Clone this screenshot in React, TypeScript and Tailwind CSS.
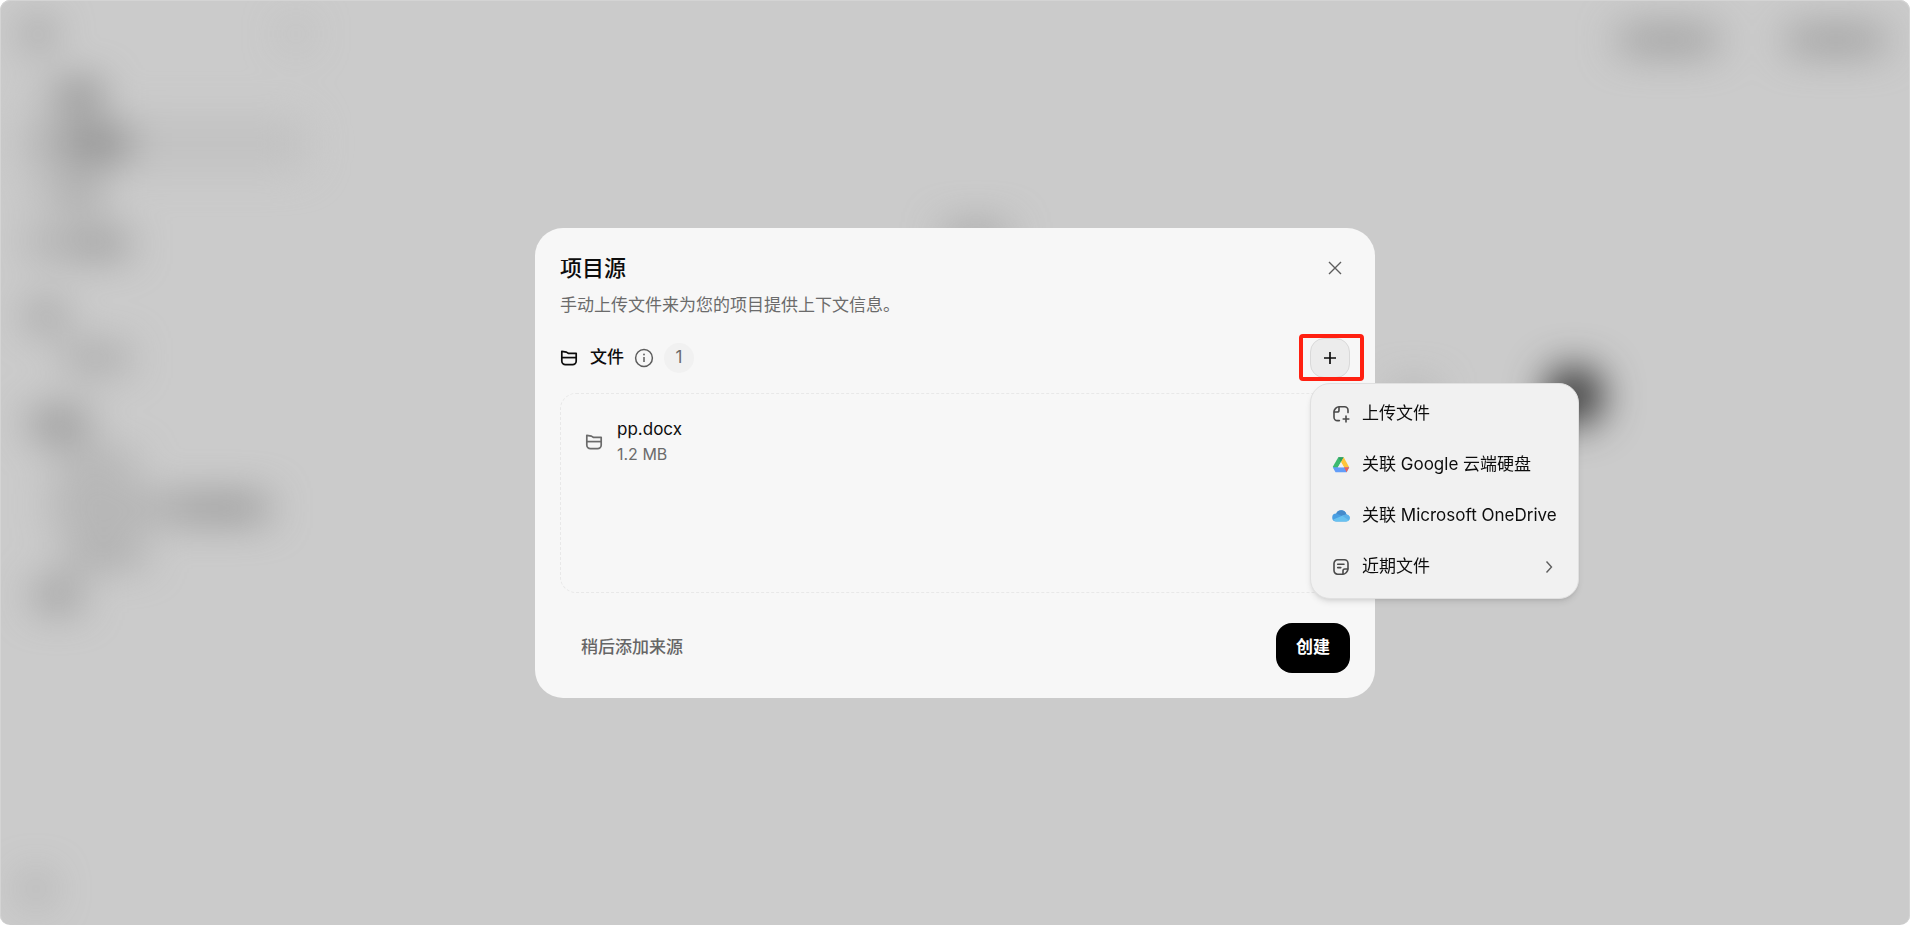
import type { ReactNode } from "react";

type IconProps = { className?: string };

//Icons
const FolderIcon = ({ className }: IconProps) => (
    <svg viewBox="0 0 18 18" className={className} fill="none" stroke="currentColor" strokeWidth="1.7" strokeLinejoin="round" aria-hidden="true">
        <path d="M1.8 2.4 6.4 3.1 8.2 4.3H16.2V12a3.6 3.6 0 0 1-3.6 3.6H5.4A3.6 3.6 0 0 1 1.8 12Z" />
        <path d="M1.8 8.6H16.2" />
    </svg>
);

const InfoIcon = ({ className }: IconProps) => (
    <svg viewBox="0 0 20 20" className={className} fill="none" stroke="currentColor" strokeWidth="1.5" aria-hidden="true">
        <circle cx="10" cy="10" r="8.4" />
        <path d="M10 9v5" />
        <circle cx="10" cy="6.5" r="0.9" fill="currentColor" stroke="none" />
    </svg>
);

const CloseIcon = ({ className }: IconProps) => (
    <svg viewBox="0 0 14 14" className={className} fill="none" stroke="currentColor" strokeWidth="1.4" aria-hidden="true">
        <path d="m1 1 12 12M13 1 1 13" />
    </svg>
);

const PlusIcon = ({ className }: IconProps) => (
    <svg viewBox="0 0 14 14" className={className} fill="none" stroke="currentColor" strokeWidth="1.7" aria-hidden="true">
        <path d="M7 1v12M1 7h12" />
    </svg>
);

const UploadFileIcon = ({ className }: IconProps) => (
    <svg viewBox="0 0 18 18" className={className} fill="none" stroke="currentColor" strokeWidth="1.6" strokeLinecap="round" strokeLinejoin="round" aria-hidden="true">
        <path d="M16 7.6V5.2A3.4 3.4 0 0 0 12.6 1.8H7.3C4.4 1.8 2 4.3 2 7.2v5A3.4 3.4 0 0 0 5.4 15.6H7.4" />
        <path d="M7 2V5.2A1.8 1.8 0 0 1 5.2 7H2.2" />
        <path d="M14 10.600v6.800M10.600 14h6.800" strokeLinecap="butt" />
    </svg>
);

const DriveIcon = ({ className }: IconProps) => (
    <svg viewBox="0 0 18 18" className={className} aria-hidden="true">
        <path d="M6.3 1.2H11.7L9 5.9 3.5 15.3.8 10.7Z" fill="#3cba70" />
        <path d="M6.3 1.2H11.7L9 5.9Z" fill="#2f9e60" />
        <path d="M11.7 1.2 17.2 11.2H11.9L9 5.9Z" fill="#fec53a" />
        <path d="M.8 11.2H17.2L14.6 16.2H3.5Z" fill="#629df9" />
        <path d="M12 11.2H17.2L14.6 16.2Z" fill="#ee6458" />
        <path d="M9 6.2 12 11.3H6.1Z" fill="#f1f1f1" />
    </svg>
);

const OneDriveIcon = ({ className }: IconProps) => (
    <svg viewBox="0 0 18 18" className={className} aria-hidden="true">
        <path d="M4.200 14.400A4 4 0 0 1 4.200 6.400C5.200 4.400 7 3.300 9.200 3.300c2.500 0 4.500 1.500 5.200 3.900A3.700 3.700 0 0 1 14.200 14.400Z" fill="#4a9fe2" />
        <path d="M4.200 6.400C5.200 4.400 7 3.300 9.200 3.300c2.500 0 4.500 1.500 5.200 3.900L10.200 9Z" fill="#458bcb" />
        <path d="M1.200 12.600 10.200 8.800C13 6.800 17.800 7.300 17.800 10.800a3.600 3.600 0 0 1-3.600 3.600H4.200C2.900 14.400 1.800 13.700 1.200 12.600Z" fill="#68c2f0" />
        <path d="M10.200 8.800C13 6.800 17.800 7.300 17.800 10.800c0 1-.4 1.900-1 2.500Z" fill="#5ab0e8" />
    </svg>
);

const NoteIcon = ({ className }: IconProps) => (
    <svg viewBox="0 0 18 18" className={className} fill="none" stroke="currentColor" strokeWidth="1.6" strokeLinecap="round" strokeLinejoin="round" aria-hidden="true">
        <path d="M16 10.6V5.4A3.6 3.6 0 0 0 12.4 1.8H5.6A3.6 3.6 0 0 0 2 5.4V12.6A3.6 3.6 0 0 0 5.6 16.2H10.6C13.4 16.2 16 13.4 16 10.6Z" />
        <path d="M15.8 11H12.8A1.8 1.8 0 0 0 11 12.8V16" />
        <path d="M5.7 6.3H12M5.7 9.6H8.8" />
    </svg>
);

const ChevronIcon = ({ className }: IconProps) => (
    <svg viewBox="0 0 8 14" className={className} fill="none" stroke="currentColor" strokeWidth="1.4" aria-hidden="true">
        <path d="m1.5 1.500 5 5.500-5 5.500" />
    </svg>
);

type MenuItemProps = { icon: ReactNode; label: string; hasSubmenu?: boolean };

const MenuItem = ({ icon, label, hasSubmenu }: MenuItemProps) => (
    <button type="button" role="menuitem" className="flex h-[51px] w-full items-center gap-3 pl-[21px] pr-[25px] text-left whitespace-nowrap text-[#0d0d0d]">
        <span className="text-[#4a4a4a]">{icon}</span>
        <span className="grow">{label}</span>
        {hasSubmenu && <ChevronIcon className="h-3.5 w-2 text-[#5d5d5d]" />}
    </button>
);

const SourceMenu = () => (
    <div role="menu" className="absolute top-[45px] left-0 w-[269px] rounded-[20px] border border-[#e0e0e0] bg-[#f1f1f1] py-[5px] shadow-md">
        <MenuItem icon={<UploadFileIcon className="size-[18px]" />} label="上传文件" />
        <MenuItem icon={<DriveIcon className="size-[18px]" />} label="关联 Google 云端硬盘" />
        <MenuItem icon={<OneDriveIcon className="size-[18px]" />} label="关联 Microsoft OneDrive" />
        <MenuItem icon={<NoteIcon className="size-[18px]" />} label="近期文件" hasSubmenu />
    </div>
);

// The app behind the dialog, only visible as blurred shapes
const Backdrop = () => (
    <div aria-hidden="true" className="flex min-h-screen overflow-hidden rounded-[10px] bg-[#cbcbcb]">
        <div className="flex grow blur-[20px]">
            <div className="flex w-[330px] shrink-0 flex-col px-6 pt-5">
                <div className="flex items-center justify-between">
                    <span className="size-7 rounded-full bg-[#8c8c8c]" />
                    <span className="size-5 rounded bg-[#b4b4b4]" />
                </div>
                <div className="mt-6 flex h-12 items-center gap-3 pl-2">
                    <span className="size-4 bg-[#b0b0b0]" />
                    <span className="h-6 w-10 bg-[#777777]" />
                </div>
                <div className="flex h-12 items-center gap-3 rounded-xl bg-[#c1c1c1] pl-2">
                    <span className="size-5 bg-[#999999]" />
                    <span className="h-6 w-16 bg-[#787878]" />
                </div>
                <div className="flex h-12 items-center gap-3 pl-2">
                    <span className="size-4 bg-[#a0a0a0]" />
                    <span className="h-5 w-10 bg-[#8c8c8c]" />
                </div>
                <div className="flex h-14 items-center gap-3 pl-2">
                    <span className="size-5 bg-[#8c8c8c]" />
                    <span className="h-5 w-16 bg-[#8a8a8a]" />
                </div>
                <div className="mt-5 flex h-12 items-center pl-1">
                    <span className="h-5 w-9 bg-[#8c8c8c]" />
                </div>
                <div className="flex h-9 items-center pl-10">
                    <span className="h-5 w-16 bg-[#9c9c9c]" />
                </div>
                <div className="mt-6 flex h-12 items-center pl-2">
                    <span className="h-6 w-14 bg-[#868686]" />
                </div>
                <div className="flex h-9 items-center pl-8">
                    <span className="h-4 w-20 bg-[#9c9c9c]" />
                </div>
                <div className="flex h-12 items-center pl-7">
                    <span className="h-5 w-32 bg-[#a0a0a0]" />
                    <span className="h-5 w-[88px] bg-[#858585]" />
                </div>
                <div className="flex h-10 items-center pl-10">
                    <span className="h-5 w-20 bg-[#9b9b9b]" />
                </div>
                <div className="flex h-12 items-center pl-3">
                    <span className="h-6 w-11 bg-[#8f8f8f]" />
                </div>
                <span className="mt-auto mb-6 size-6 rounded-full bg-[#989898]" />
            </div>
            <div className="flex grow flex-col items-center">
                <div className="flex h-20 items-center gap-[72px] self-end pr-[26px]">
                    <span className="h-5 w-24 bg-[#8c8c8c]" />
                    <span className="h-5 w-24 bg-[#8c8c8c]" />
                </div>
                <span className="mt-[148px] mr-72 h-4 w-16 bg-[#8f8f8f]" />
                <div className="mt-[124px] flex h-14 w-full items-center justify-end gap-28 pr-[308px]">
                    <span className="h-4 w-10 bg-[#a0a0a0]" />
                    <span className="size-14 rounded-full bg-[#222222]" />
                </div>
            </div>
        </div>
    </div>
);

const SourcesDialog = () => (
    <div role="dialog" aria-modal="true" aria-labelledby="sources-title" className="flex w-full max-w-[840px] flex-col rounded-[28px] bg-[#f7f7f7] p-[25px]">
        <header className="flex items-start justify-between">
            <div>
                <h2 id="sources-title" className="text-[22px] leading-[30px] font-medium text-[#0d0d0d]">项目源</h2>
                <p className="mt-2 leading-7 text-[#6b6b6b]">手动上传文件来为您的项目提供上下文信息。</p>
            </div>
            <button type="button" aria-label="关闭" className="flex size-[30px] items-center justify-center text-[#5d5d5d]">
                <CloseIcon className="size-3.5" />
            </button>
        </header>

        <div className="mt-[19px] flex items-center justify-between">
            <div className="flex items-center">
                <FolderIcon className="size-[18px] text-[#0d0d0d]" />
                <h3 className="ml-3 font-medium text-[#0d0d0d]">文件</h3>
                <InfoIcon className="ml-2.5 size-5 text-[#5d5d5d]" />
                <span className="ml-2.5 flex size-[30px] items-center justify-center rounded-full bg-[#f1f1f1] text-[#6b6b6b]">1</span>
            </div>
            <div className="relative">
                <button type="button" aria-label="添加文件" aria-haspopup="menu" aria-expanded="true" className="flex size-10 items-center justify-center rounded-[14px] border border-[#d9d9d9] bg-[#ececec] text-[#0d0d0d]">
                    <PlusIcon className="size-3.5" />
                </button>
                <span className="pointer-events-none absolute -top-1 -left-[11px] h-[47px] w-[65px] rounded border-4 border-[#ff2011]" />
                <SourceMenu />
            </div>
        </div>

        <div className="mt-[15px] min-h-[200px] rounded-2xl border border-dashed border-[#e8e8e8] px-6 py-[23px]">
            <div className="flex items-center gap-3.5">
                <FolderIcon className="size-[18px] text-[#6b6b6b]" />
                <div className="leading-[25px]">
                    <p className="text-[#0d0d0d]">pp.docx</p>
                    <p className="text-base leading-[25px] text-[#6b6b6b]">1.2 MB</p>
                </div>
            </div>
        </div>

        <footer className="mt-[30px] flex items-center justify-between">
            <button type="button" className="h-[50px] px-[21px] font-medium text-[#666666]">稍后添加来源</button>
            <button type="button" className="h-[50px] rounded-2xl bg-black px-5 font-bold text-white">创建</button>
        </footer>
    </div>
);

const App = () => {
    return (
        <main className="min-h-screen bg-white font-['Inter','Noto_Sans_CJK_SC',sans-serif] text-[17px]">
            <Backdrop />
            <div className="fixed inset-0 flex items-center justify-center rounded-[10px] border-x border-t border-[#d4d4d4] pb-px">
                <SourcesDialog />
            </div>
        </main>
    );
};

export default App;
